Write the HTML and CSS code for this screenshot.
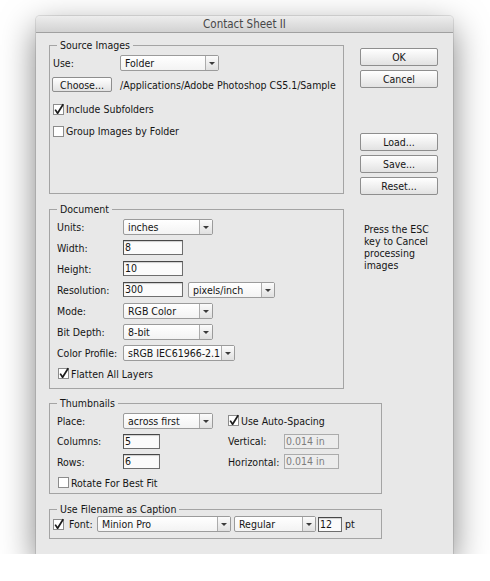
FILE: index.html
```html
<!DOCTYPE html>
<html>
<head>
<meta charset="utf-8">
<title>Contact Sheet II</title>
<link rel="stylesheet" href="styles.css">
</head>
<body>
<div class="window">
  <div class="titlebar">Contact Sheet II</div>
  <div class="content">
    <fieldset class="group source">
      <legend>Source Images</legend>
      <div class="row">
        <span class="lbl lbl-use">Use:</span>
        <span class="select w-folder"><span class="val">Folder</span><span class="arrow"></span></span>
      </div>
      <div class="row row-choose">
        <span class="button btn-choose">Choose...</span>
        <span class="path">/Applications/Adobe Photoshop CS5.1/Sample</span>
      </div>
      <div class="row row-chk row-include">
        <svg class="check" viewBox="0 0 11 11"><rect x="0.5" y="0.5" width="10" height="10"/><path d="M2.2 5.6 L4.6 9.2 L10.2 0.2"/></svg>
        <span>Include Subfolders</span>
      </div>
      <div class="row row-chk">
        <svg class="check" viewBox="0 0 11 11"><rect x="0.5" y="0.5" width="10" height="10"/></svg>
        <span>Group Images by Folder</span>
      </div>
    </fieldset>

    <div class="side">
      <span class="button btn-side btn-ok">OK</span>
      <span class="button btn-side">Cancel</span>
      <span class="button btn-side btn-load">Load...</span>
      <span class="button btn-side">Save...</span>
      <span class="button btn-side">Reset...</span>
      <p class="note">Press the ESC<br>key to Cancel<br>processing<br>images</p>
    </div>

    <fieldset class="group document">
      <legend>Document</legend>
      <div class="row">
        <span class="lbl">Units:</span>
        <span class="select w-std"><span class="val">inches</span><span class="arrow"></span></span>
      </div>
      <div class="row">
        <span class="lbl">Width:</span>
        <span class="input w-num">8</span>
      </div>
      <div class="row">
        <span class="lbl">Height:</span>
        <span class="input w-num">10</span>
      </div>
      <div class="row">
        <span class="lbl">Resolution:</span>
        <span class="input w-num">300</span>
        <span class="select w-res"><span class="val">pixels/inch</span><span class="arrow"></span></span>
      </div>
      <div class="row">
        <span class="lbl">Mode:</span>
        <span class="select w-std"><span class="val">RGB Color</span><span class="arrow"></span></span>
      </div>
      <div class="row">
        <span class="lbl">Bit Depth:</span>
        <span class="select w-std"><span class="val">8-bit</span><span class="arrow"></span></span>
      </div>
      <div class="row">
        <span class="lbl">Color Profile:</span>
        <span class="select w-profile"><span class="val">sRGB IEC61966-2.1</span><span class="arrow"></span></span>
      </div>
      <div class="row row-chk">
        <svg class="check" viewBox="0 0 11 11"><rect x="0.5" y="0.5" width="10" height="10"/><path d="M2.2 5.6 L4.6 9.2 L10.2 0.2"/></svg>
        <span>Flatten All Layers</span>
      </div>
    </fieldset>

    <fieldset class="group thumbs">
      <legend>Thumbnails</legend>
      <div class="row">
        <div class="half">
          <span class="lbl">Place:</span>
          <span class="select w-std"><span class="val">across first</span><span class="arrow"></span></span>
        </div>
        <div class="half2 row-chk">
          <svg class="check" viewBox="0 0 11 11"><rect x="0.5" y="0.5" width="10" height="10"/><path d="M2.2 5.6 L4.6 9.2 L10.2 0.2"/></svg>
          <span>Use Auto-Spacing</span>
        </div>
      </div>
      <div class="row row-20">
        <div class="half">
          <span class="lbl">Columns:</span>
          <span class="input w-small">5</span>
        </div>
        <div class="half2">
          <span class="lbl2">Vertical:</span>
          <span class="input disabled w-space">0.014 in</span>
        </div>
      </div>
      <div class="row">
        <div class="half">
          <span class="lbl">Rows:</span>
          <span class="input w-small">6</span>
        </div>
        <div class="half2">
          <span class="lbl2">Horizontal:</span>
          <span class="input disabled w-space">0.014 in</span>
        </div>
      </div>
      <div class="row row-chk">
        <svg class="check" viewBox="0 0 11 11"><rect x="0.5" y="0.5" width="10" height="10"/></svg>
        <span>Rotate For Best Fit</span>
      </div>
    </fieldset>

    <fieldset class="group caption">
      <legend>Use Filename as Caption</legend>
      <div class="row row-font">
        <svg class="check" viewBox="0 0 11 11"><rect x="0.5" y="0.5" width="10" height="10"/><path d="M2.2 5.6 L4.6 9.2 L10.2 0.2"/></svg>
        <span class="lbl-font">Font:</span>
        <span class="select w-font"><span class="val">Minion Pro</span><span class="arrow"></span></span>
        <span class="select w-style"><span class="val">Regular</span><span class="arrow"></span></span>
        <span class="input w-pt">12</span>
        <span class="pt">pt</span>
      </div>
    </fieldset>
  </div>
</div>
</body>
</html>
```

FILE: styles.css
```css
html, body {
  margin: 0;
  background: #ffffff;
}
body {
  padding: 16px 0 0 36px;
  font-family: "DejaVu Sans Condensed", "DejaVu Sans", sans-serif;
  font-stretch: condensed;
  font-size: 10.5px;
  color: #151515;
}
.window {
  width: 417px;
  height: 538px;
  box-sizing: border-box;
  background: #e8e8e8;
  border-radius: 4px 4px 0 0;
  box-shadow: 0 12px 34px rgba(0, 0, 0, 0.5), 0 0 0 1px rgba(0, 0, 0, 0.1);
}
.titlebar {
  height: 16px;
  line-height: 16px;
  text-align: center;
  background: linear-gradient(#ededed, #d2d2d2);
  border-bottom: 1px solid #a0a0a0;
  border-radius: 4px 4px 0 0;
  font-size: 11.5px;
  color: #474747;
}
.content {
  display: grid;
  grid-template-columns: 295px 78px;
  column-gap: 16px;
  row-gap: 9px;
  padding: 6px 0 0 13px;
  align-items: start;
}
.group {
  margin: 0;
  padding: 1px 0 0 3px;
  border: 1px solid #a4a4a4;
  min-width: 0;
  box-sizing: border-box;
}
.group legend {
  padding: 0 3px;
  margin-left: 4px;
  line-height: 12px;
  font-size: 10.5px;
}
.source { grid-column: 1; grid-row: 1; height: 155px; }
.document { grid-column: 1; grid-row: 2; padding-bottom: 4px; }
.thumbs { grid-column: 1 / -1; grid-row: 3; width: 333px; margin-top: -1px; }
.caption { grid-column: 1 / -1; grid-row: 4; width: 333px; padding-bottom: 6px; }

.row {
  display: flex;
  align-items: center;
  height: 21px;
  white-space: nowrap;
}
.row-20 { height: 20px; }
.document .row, .thumbs .row { padding-left: 4px; }
.row-choose { height: 23px; }
.row-include { margin-top: 2px; height: 22px; }
.source .row-chk { height: 22px; }

.lbl { width: 66px; flex: none; }
.lbl-use { width: 67px; }

.half { display: flex; align-items: center; width: 171px; flex: none; }
.half2 { display: flex; align-items: center; }
.lbl2 { width: 56px; flex: none; }

.row-chk { display: flex; align-items: center; }
.check {
  width: 11px;
  height: 11px;
  margin-right: 2px;
  flex: none;
  overflow: visible;
}
.check rect {
  fill: #ffffff;
  stroke: #8c8c8c;
  stroke-width: 1;
}
.check path {
  fill: none;
  stroke: #1c1c1c;
  stroke-width: 1.7;
  stroke-linejoin: round;
}
.document .row-chk .check, .thumbs > .row-chk .check { margin-left: 1px; }

.select {
  display: flex;
  height: 16px;
  box-sizing: border-box;
  border: 1px solid #9b9b9b;
  border-radius: 2px;
  background: linear-gradient(#ffffff, #f3f3f3);
  flex: none;
}
.select .val {
  flex: 1;
  padding-left: 4px;
  line-height: 14px;
  white-space: nowrap;
  overflow: hidden;
}
.select .arrow {
  width: 12px;
  flex: none;
  border-left: 1px solid #acacac;
  background: linear-gradient(#fbfbfb, #e0e0e0);
  position: relative;
}
.select .arrow::after {
  content: "";
  position: absolute;
  left: 3px;
  top: 6px;
  border-left: 3px solid transparent;
  border-right: 3px solid transparent;
  border-top: 3px solid #3a3a3a;
}
.w-folder { width: 99px; }
.w-std { width: 90px; }
.w-res { width: 87px; margin-left: 5px; }
.w-profile { width: 112px; }
.w-font { width: 134px; }
.w-style { width: 82px; margin-left: 3px; }

.input {
  height: 15px;
  box-sizing: border-box;
  border: 1px solid #6e6e6e;
  border-top-color: #474747;
  border-left-color: #555555;
  background: #fbfbfb;
  padding-left: 1px;
  line-height: 12px;
  box-shadow: inset 0 1px 1px rgba(0, 0, 0, 0.18);
  flex: none;
}
.input.disabled {
  border-color: #ababab;
  background: #ececec;
  color: #7d7d7d;
  box-shadow: none;
}
.w-num { width: 60px; }
.w-small { width: 37px; }
.w-space { width: 55px; }
.w-pt { width: 24px; margin-left: 2px; }

.button {
  display: flex;
  align-items: center;
  justify-content: center;
  height: 18px;
  box-sizing: border-box;
  border: 1px solid #8e8e8e;
  border-radius: 2px;
  background: linear-gradient(#ffffff, #e2e2e2);
  flex: none;
}
.btn-choose {
  width: 60px;
  height: 15px;
  margin-left: -1px;
}
.path { margin-left: 8px; white-space: nowrap; }

.side {
  grid-column: 2;
  grid-row: 1 / span 2;
  display: flex;
  flex-direction: column;
  gap: 4px;
  padding-top: 9px;
}
.btn-load { margin-top: 41px; }
.note {
  margin: 24px 0 0 4px;
  line-height: 12px;
}

.row-font .check { margin-right: 5px; }
.lbl-font { width: 28px; flex: none; }
.row-font { height: 16px; }
.pt { margin-left: 3px; }
```
